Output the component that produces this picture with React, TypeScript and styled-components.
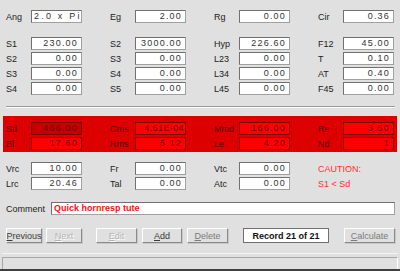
import React from "react";
import styled, { createGlobalStyle } from "styled-components";

const Global = createGlobalStyle`
  html, body { margin: 0; padding: 0; background: #e0e0e0; }
  #root { width: 400px; height: 271px; }
`;

const Window = styled.div`
  width: 400px;
  height: 271px;
  box-sizing: border-box;
  background: #e0e0e0;
  font-family: "Liberation Sans", Arial, sans-serif;
  font-size: 9px;
  color: #222;
  overflow: hidden;
  border-bottom: 2px solid #404040;
`;

const Grid = styled.div<{ $mt: number }>`
  display: grid;
  grid-template-columns: repeat(4, 104px);
  row-gap: 2px;
  padding-left: 6px;
  margin-top: ${({ $mt }) => $mt}px;
`;

const Cell = styled.div`
  display: flex;
  align-items: center;
  height: 13px;
`;

const Label = styled.span<{ $red?: boolean }>`
  width: 25px;
  flex: none;
  color: ${({ $red }) => ($red ? "#5a0000" : "#222")};
`;

const Field = styled.div<{ $red?: boolean; $dark?: boolean; $left?: boolean; $tight?: boolean }>`
  width: 51px;
  height: 13px;
  box-sizing: border-box;
  border: 1px solid ${({ $red }) => ($red ? "#7a0000" : "#707070")};
  border-right-color: ${({ $red }) => ($red ? "#7a0000" : "#a0a0a0")};
  border-bottom-color: ${({ $red }) => ($red ? "#7a0000" : "#a0a0a0")};
  background: ${({ $red, $dark }) => ($dark ? "#c40000" : $red ? "#ff0000" : "#ffffff")};
  color: ${({ $red }) => ($red ? "#6a0000" : "#333")};
  letter-spacing: ${({ $tight, $left }) => ($tight ? "0.4px" : $left ? "2.2px" : "1.2px")};
  text-align: ${({ $left }) => ($left ? "left" : "right")};
  padding: 0 ${({ $tight }) => ($tight ? 1 : 3)}px 0 2px;
  line-height: 11px;
  white-space: nowrap;
  overflow: hidden;
`;

const Caution = styled.span`
  color: #ff3030;
`;

const Separator = styled.div`
  margin: 11px 5px 0 6px;
  height: 1px;
  background: #9a9a9a;
  border-bottom: 1px solid #ffffff;
`;

const RedPanel = styled.div`
  margin: 8px 3px 0 3px;
  padding: 6px 0 3px 3px;
  background: #dd0000;
  height: 36px;
  box-sizing: border-box;
  & > div {
    margin-top: 0;
    padding-left: 0;
  }
`;

const CommentRow = styled.div`
  display: flex;
  align-items: center;
  margin: 12px 5px 0 6px;
`;

const CommentLabel = styled.span`
  width: 45px;
  flex: none;
`;

const CommentField = styled.div`
  flex: 1;
  height: 13px;
  box-sizing: border-box;
  border: 1px solid #707070;
  border-right-color: #a0a0a0;
  border-bottom-color: #a0a0a0;
  background: #fff;
  color: #ff1010;
  font-weight: bold;
  padding-left: 2px;
  line-height: 11px;
`;

const ButtonRow = styled.div`
  display: flex;
  align-items: center;
  margin: 13px 0 0 6px;
  height: 15px;
`;

const Button = styled.div<{ $w: number; $ml?: number; $state?: "on" | "dim" | "off" }>`
  width: ${({ $w }) => $w}px;
  height: 15px;
  margin-left: ${({ $ml }) => $ml ?? 0}px;
  box-sizing: border-box;
  border: 1px solid #fff;
  border-right-color: #8a8a8a;
  border-bottom-color: #8a8a8a;
  box-shadow: 1px 1px 0 #c8c8c8;
  display: flex;
  align-items: center;
  justify-content: center;
  color: ${({ $state }) => ($state === "off" ? "#b4b4b4" : $state === "dim" ? "#7a7a7a" : "#3a3a3a")};
  text-shadow: ${({ $state }) => ($state === "off" ? "1px 1px 0 #fff" : "none")};
  u { text-decoration: underline; }
`;

const RecordBox = styled.div`
  width: 86px;
  height: 15px;
  margin-left: 15px;
  box-sizing: border-box;
  border: 1px solid #707070;
  background: #fff;
  display: flex;
  align-items: center;
  justify-content: center;
  font-weight: bold;
  color: #111;
`;

const StatusBar = styled.div`
  margin: 10px 2px 0 2px;
  border-top: 1px solid #f4f4f4;
  padding-top: 3px;
`;

const StatusInner = styled.div`
  height: 11px;
  border: 1px solid #a8a8a8;
  border-right-color: #fff;
  border-bottom-color: #fff;
`;

type Item = { label: string; value: string; left?: boolean };

const top: Item[] = [
  { label: "Ang", value: "2.0 x Pi", left: true },
  { label: "Eg", value: "2.00" },
  { label: "Rg", value: "0.00" },
  { label: "Cir", value: "0.36" },
];

const params: Item[] = [
  { label: "S1", value: "230.00" },
  { label: "S2", value: "3000.00" },
  { label: "Hyp", value: "226.60" },
  { label: "F12", value: "45.00" },
  { label: "S2", value: "0.00" },
  { label: "S3", value: "0.00" },
  { label: "L23", value: "0.00" },
  { label: "T", value: "0.10" },
  { label: "S3", value: "0.00" },
  { label: "S4", value: "0.00" },
  { label: "L34", value: "0.00" },
  { label: "AT", value: "0.40" },
  { label: "S4", value: "0.00" },
  { label: "S5", value: "0.00" },
  { label: "L45", value: "0.00" },
  { label: "F45", value: "0.00" },
];

const driver: Item[] = [
  { label: "Sd", value: "466.00" },
  { label: "Cms", value: "4.61E-04" },
  { label: "Mmd", value: "166.00" },
  { label: "Re", value: "3.50" },
  { label: "Bl", value: "17.60" },
  { label: "Rms", value: "5.12" },
  { label: "Le", value: "4.20" },
  { label: "Nd", value: "1" },
];

const renderCells = (items: Item[], red?: boolean) =>
  items.map((it, i) => (
    <Cell key={i}>
      <Label $red={red}>{it.label}</Label>
      <Field
        $red={red}
        $dark={red && i === 0}
        $left={it.left}
        $tight={!it.left && it.value.length > 7}
      >
        {it.value}
      </Field>
    </Cell>
  ));

const App = () => {
  return (
    <Window>
      <Global />
      <Grid $mt={10}>{renderCells(top)}</Grid>
      <Grid $mt={14}>{renderCells(params)}</Grid>
      <Separator />
      <RedPanel>
        <Grid $mt={0}>{renderCells(driver, true)}</Grid>
      </RedPanel>
      <Grid $mt={10}>
        {renderCells([
          { label: "Vrc", value: "10.00" },
          { label: "Fr", value: "0.00" },
          { label: "Vtc", value: "0.00" },
        ])}
        <Cell>
          <Caution>CAUTION:</Caution>
        </Cell>
        {renderCells([
          { label: "Lrc", value: "20.46" },
          { label: "Tal", value: "0.00" },
          { label: "Atc", value: "0.00" },
        ])}
        <Cell>
          <Caution>S1 &lt; Sd</Caution>
        </Cell>
      </Grid>
      <CommentRow>
        <CommentLabel>Comment</CommentLabel>
        <CommentField>Quick hornresp tute</CommentField>
      </CommentRow>
      <ButtonRow>
        <Button $w={36} $state="on">
          <span><u>P</u>revious</span>
        </Button>
        <Button $w={36} $ml={4} $state="off">
          <span><u>N</u>ext</span>
        </Button>
        <Button $w={41} $ml={14} $state="off">
          <span><u>E</u>dit</span>
        </Button>
        <Button $w={40} $ml={5} $state="on">
          <span><u>A</u>dd</span>
        </Button>
        <Button $w={41} $ml={5} $state="dim">
          <span><u>D</u>elete</span>
        </Button>
        <RecordBox>Record 21 of 21</RecordBox>
        <Button $w={51} $ml={15} $state="dim">
          <span><u>C</u>alculate</span>
        </Button>
      </ButtonRow>
      <StatusBar>
        <StatusInner />
      </StatusBar>
    </Window>
  );
};

export default App;
